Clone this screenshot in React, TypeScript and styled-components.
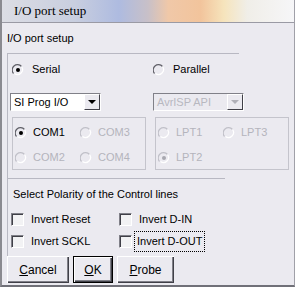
import React from 'react';
import styled, { createGlobalStyle } from 'styled-components';

const Global = createGlobalStyle`
  html, body { margin: 0; padding: 0; background: #ffffff; }
  body { font-family: "Liberation Sans", Arial, sans-serif; font-size: 11px; color: #000; }
`;

const Window = styled.div`
  width: 292px;
  height: 285px;
  border-left: 2px solid #8a8a90;
  border-right: 1px solid #a0a0a8;
  border-bottom: 2px solid #707078;
  background: #ebeaf0;
  display: flex;
  flex-direction: column;
`;

const TitleBar = styled.div`
  height: 22px;
  border-bottom: 1px solid #9a9aa4;
  padding-left: 12px;
  font-family: "Liberation Serif", "Times New Roman", serif;
  font-size: 13px;
  line-height: 22px;
  background: linear-gradient(
    90deg,
    #dcdde4 0%,
    #c8cedf 25%,
    #aebbe0 40%,
    #c8c0c8 50%,
    #f0c8a8 57%,
    #f2c49c 68%,
    #f6e4bc 76%,
    #f0eee8 84%,
    #f6f6f8 100%
  );
`;

const Body = styled.div`
  padding: 9px 0 0 5px;
  display: flex;
  flex-direction: column;
`;

const Caption = styled.div`
  line-height: 13px;
  height: 13px;
`;

const Group = styled.div`
  margin-top: 8px;
  border-left: 1px solid #b8b8c2;
  display: flex;
  flex-direction: column;
  height: 203px;
`;

const Rule = styled.div<{ $w: number }>`
  width: ${p => p.$w}px;
  height: 1px;
  background: #b8b8c2;
`;

const Row = styled.div<{ $top?: number; $left?: number; $gap?: number }>`
  display: flex;
  align-items: center;
  margin-top: ${p => p.$top ?? 0}px;
  padding-left: ${p => p.$left ?? 0}px;
  gap: ${p => p.$gap ?? 0}px;
`;

const Option = styled.label<{ $w?: number; $off?: boolean }>`
  display: flex;
  align-items: center;
  gap: 6px;
  height: 13px;
  width: ${p => (p.$w ? `${p.$w}px` : 'auto')};
  color: ${p => (p.$off ? '#b4b4bc' : '#000')};
  line-height: 13px;
`;

const Combo = styled.div<{ $off?: boolean }>`
  width: 91px;
  height: 18px;
  box-sizing: border-box;
  display: flex;
  align-items: stretch;
  border-top: 1px solid #808088;
  border-left: 1px solid #808088;
  border-right: 1px solid #ffffff;
  border-bottom: 1px solid #ffffff;
  background: ${p => (p.$off ? '#ebeaf0' : '#ffffff')};
  color: ${p => (p.$off ? '#b8b8c0' : '#000')};
`;

const ComboText = styled.div`
  flex: 1;
  padding-left: 3px;
  line-height: 16px;
`;

const ComboArrow = styled.div<{ $off?: boolean }>`
  width: 16px;
  box-sizing: border-box;
  background: #ebeaf0;
  border-top: 1px solid #ffffff;
  border-left: 1px solid #ffffff;
  border-right: 1px solid #404048;
  border-bottom: 1px solid #404048;
  display: flex;
  align-items: center;
  justify-content: center;
  &::after {
    content: '';
    border-left: 4px solid transparent;
    border-right: 4px solid transparent;
    border-top: 4px solid ${p => (p.$off ? '#b0b0b8' : '#000')};
  }
`;

const PortBox = styled.div<{ $w: number }>`
  width: ${p => p.$w}px;
  height: 53px;
  box-sizing: border-box;
  border: 1px solid #c4c4cc;
  display: grid;
  grid-template-columns: 65px 1fr;
  grid-template-rows: 25px 25px;
  padding: 2px 0 0 2px;
  align-items: center;
`;

const Polarity = styled.div`
  margin-top: 9px;
  padding-left: 5px;
  line-height: 13px;
`;

const CheckGrid = styled.div`
  display: grid;
  grid-template-columns: 108px 1fr;
  grid-auto-rows: 22px;
  margin-top: 7px;
  padding-left: 3px;
  align-items: center;
`;

const Box = styled.span`
  width: 13px;
  height: 13px;
  box-sizing: border-box;
  border-top: 1px solid #808088;
  border-left: 1px solid #808088;
  border-right: 1px solid #ffffff;
  border-bottom: 1px solid #ffffff;
  box-shadow: inset 1px 1px 0 #404048;
  background: #f2f2f4;
  flex: none;
`;

const Check = styled.label`
  display: flex;
  align-items: center;
  gap: 7px;
  line-height: 13px;
`;

const Focus = styled.span`
  outline: 1px dotted #000;
  outline-offset: 1px;
  padding: 2px 1px;
  margin-left: -3px;
`;

const Buttons = styled.div`
  display: flex;
  gap: 4px;
  margin-top: 0;
`;

const Button = styled.button<{ $w: number; $def?: boolean }>`
  width: ${p => p.$w}px;
  height: 27px;
  padding: 0;
  font: inherit;
  font-size: 12px;
  color: #000;
  background: #ebeaf0;
  border: none;
  box-shadow: ${p =>
    p.$def
      ? 'inset 0 0 0 1px #000, inset 2px 2px 0 #fff, inset -2px -2px 0 #404048, inset -3px -3px 0 #808088'
      : 'inset 1px 1px 0 #fff, inset -1px -1px 0 #404048, inset -2px -2px 0 #808088'};
  u { text-decoration: underline; }
`;

function Radio({ on, off }: { on?: boolean; off?: boolean }) {
  const dark = off ? '#c0c0c8' : '#606068';
  return (
    <svg width="12" height="12" viewBox="0 0 12 12" style={{ flex: 'none' }}>
      <path d="M9.5 2.5 A5 5 0 0 0 1.5 9.5" fill="none" stroke={dark} strokeWidth="1.2" />
      <path d="M2.5 9.5 A5 5 0 0 0 9.5 2.5" fill="none" stroke="#ffffff" strokeWidth="1.2" />
      {on && <circle cx="6" cy="6" r="2" fill={off ? '#a8a8b0' : '#000'} />}
    </svg>
  );
}

export default function App() {
  return (
    <>
      <Global />
      <Window>
        <TitleBar>I/O port setup</TitleBar>
        <Body>
          <Caption>I/O port setup</Caption>
          <Group>
            <Rule $w={231} />
            <Row $top={9} $left={4}>
              <Option $w={141}>
                <Radio on />
                <span style={{ marginLeft: 2 }}>Serial</span>
              </Option>
              <Option>
                <Radio />
                <span style={{ marginLeft: 2 }}>Parallel</span>
              </Option>
            </Row>
            <Row $top={17} $left={2} $gap={52}>
              <Combo>
                <ComboText>SI Prog I/O</ComboText>
                <ComboArrow />
              </Combo>
              <Combo $off>
                <ComboText>AvrISP API</ComboText>
                <ComboArrow $off />
              </Combo>
            </Row>
            <Row $top={6} $left={4} $gap={9}>
              <PortBox $w={134}>
                <Option><Radio on />COM1</Option>
                <Option $off><Radio off />COM3</Option>
                <Option $off><Radio off />COM2</Option>
                <Option $off><Radio off />COM4</Option>
              </PortBox>
              <PortBox $w={134}>
                <Option $off><Radio off />LPT1</Option>
                <Option $off><Radio off />LPT3</Option>
                <Option $off><Radio on off />LPT2</Option>
              </PortBox>
            </Row>
            <Row $top={8}>
              <Rule $w={217} />
            </Row>
            <Polarity>Select Polarity of the Control lines</Polarity>
            <CheckGrid>
              <Check><Box />Invert Reset</Check>
              <Check><Box />Invert D-IN</Check>
              <Check><Box />Invert SCKL</Check>
              <Check><Box /><Focus>Invert D-OUT</Focus></Check>
            </CheckGrid>
          </Group>
          <Buttons>
            <Button $w={62}><u>C</u>ancel</Button>
            <Button $w={40} $def><u>O</u>K</Button>
            <Button $w={57}><u>P</u>robe</Button>
          </Buttons>
        </Body>
      </Window>
    </>
  );
}
